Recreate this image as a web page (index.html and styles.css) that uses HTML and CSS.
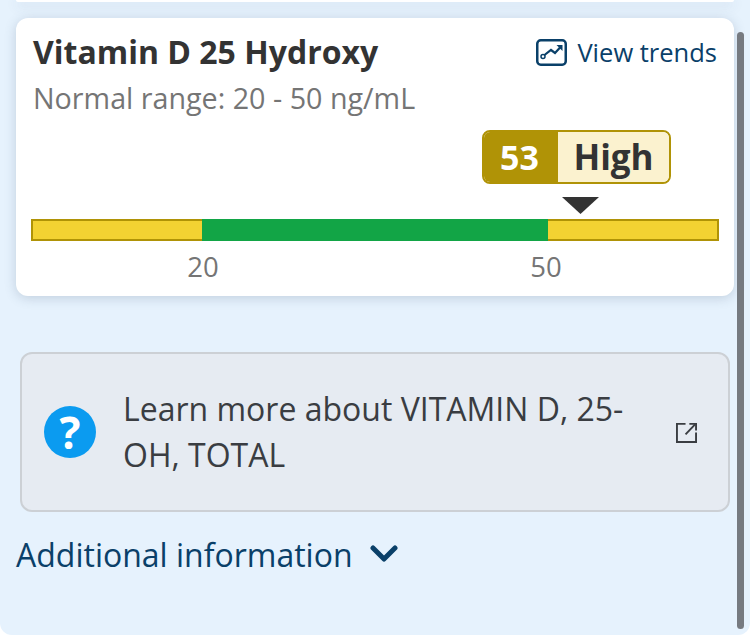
FILE: index.html
```html
<!DOCTYPE html>
<html lang="en">
<head>
<meta charset="utf-8">
<title>Vitamin D 25 Hydroxy</title>
<link rel="stylesheet" href="styles.css">
</head>
<body>
<main class="panel">
  <div class="prev-card"></div>
  <section class="card">
    <header class="card-head">
      <h2 class="title">Vitamin D 25 Hydroxy</h2>
      <a class="trends">
        <svg class="trends-icon" viewBox="0 0 31 27" aria-hidden="true">
          <rect x="1.25" y="1.25" width="28.5" height="24.5" rx="3.5" fill="none" stroke="currentColor" stroke-width="2.5"/>
          <path d="M8.5 16 L15 11 L19 14 L25 7.5" fill="none" stroke="currentColor" stroke-width="2.2"/>
          <path d="M20.5 6 H26.5 V12 Z" fill="currentColor"/>
          <circle cx="7" cy="17.5" r="2" fill="none" stroke="currentColor" stroke-width="1.5"/>
        </svg>
        <span>View trends</span>
      </a>
    </header>
    <p class="range">Normal range: 20 - 50 ng/mL</p>
    <div class="badge-row">
      <div class="badge"><span class="badge-value">53</span><span class="badge-label">High</span></div>
    </div>
    <div class="pointer-row"><div class="pointer"></div></div>
    <div class="bar">
      <div class="seg seg-low"></div>
      <div class="seg seg-normal"></div>
      <div class="seg seg-high"></div>
    </div>
    <div class="scale">
      <span class="tick tick-20">20</span>
      <span class="tick tick-50">50</span>
    </div>
  </section>
  <a class="learn">
    <span class="help-icon" aria-hidden="true">?</span>
    <span class="learn-text">Learn more about VITAMIN D, 25-OH, TOTAL</span>
    <svg class="ext-icon" viewBox="0 0 22 22" aria-hidden="true">
      <path d="M10 2 H1 V21 H21 V11" fill="none" stroke="currentColor" stroke-width="2"/>
      <path d="M10 13 L20 2.5" fill="none" stroke="currentColor" stroke-width="2"/>
      <path d="M14 2 H21 V9" fill="none" stroke="currentColor" stroke-width="2"/>
    </svg>
  </a>
  <a class="additional">
    <span>Additional information</span>
    <svg class="chevron" viewBox="0 0 28 18" aria-hidden="true">
      <path d="M3 3 L14 14 L25 3" fill="none" stroke="currentColor" stroke-width="5" stroke-linecap="round" stroke-linejoin="round"/>
    </svg>
  </a>
  <div class="scrollbar"></div>
</main>
</body>
</html>
```
FILE: styles.css
```css
* { box-sizing: border-box; }
html, body { margin: 0; height: 100%; background: #ffffff; }
body { font-family: "Open Sans", "Noto Sans", sans-serif; overflow: hidden; }
.panel {
  position: relative;
  width: 750px;
  height: 635px;
  background: #e6f2fd;
  border-radius: 0 0 12px 12px;
  overflow: hidden;
}
.prev-card {
  height: 2px;
  margin: 0 16px 16px;
  background: #fff;
  border-radius: 0 0 10px 10px;
  box-shadow: 0 3px 12px rgba(60, 80, 110, .28);
}
.card {
  margin: 0 16px;
  height: 278px;
  background: #fff;
  border-radius: 12px;
  padding: 14px 15px 0 15px;
  box-shadow: 0 2px 12px rgba(60, 80, 110, .22);
}
.card-head { display: flex; justify-content: space-between; align-items: center; height: 40px; padding-left: 2px; }
.title { margin: 0; font-size: 32px; line-height: 40px; font-weight: 700; color: #333; }
.trends { display: flex; align-items: center; gap: 10px; color: #0a4069; font-size: 25.5px; line-height: 40px; margin-right: 2px; }
.trends-icon { width: 31px; height: 27px; }
.range { margin: 8px 0 0; padding-left: 2px; font-size: 28.7px; line-height: 36px; color: #757575; }
.badge-row { display: flex; justify-content: flex-end; margin-top: 14px; padding-right: 48px; }
.badge {
  display: flex;
  width: 189px;
  height: 54px;
  border: 2px solid #b09306;
  border-radius: 8px;
  overflow: hidden;
  font-weight: 700;
  line-height: 50px;
}
.badge-value { width: 74px; padding-right: 3px; background: #b09306; color: #fff; font-size: 34px; text-align: center; }
.badge-label { flex: 1; background: #fbf2cf; color: #333; font-size: 35px; text-align: center; }
.pointer-row { display: flex; justify-content: flex-end; height: 35px; padding: 13px 120px 0 0; }
.pointer { width: 37px; height: 17px; background: #333; clip-path: polygon(0 0, 100% 0, 50% 100%); }
.bar { display: flex; height: 22px; }
.seg { height: 100%; border-top: 2px solid #b09306; border-bottom: 2px solid #b09306; }
.seg-low { width: 171px; background: #f3d232; border-left: 2px solid #b09306; }
.seg-normal { width: 346px; background: #12a546; border-color: #12a546; }
.seg-high { flex: 1; background: #f3d232; border-right: 2px solid #b09306; }
.scale { display: flex; margin-top: 7px; font-size: 27.5px; line-height: 38px; color: #757575; }
.tick { display: block; width: 60px; text-align: center; }
.tick-20 { margin-left: 142px; }
.tick-50 { margin-left: 283px; }
.learn {
  display: flex;
  align-items: center;
  margin: 56px 20px 0;
  height: 160px;
  padding: 0 31px 0 22px;
  background: #e6ebf2;
  border: 2px solid #ccd0d5;
  border-radius: 12px;
  color: #3a3d42;
}
.help-icon {
  display: flex;
  align-items: center;
  justify-content: center;
  flex: none;
  width: 52px;
  height: 52px;
  border-radius: 50%;
  background: #0b9bf0;
  color: #fff;
  font-size: 44px;
  font-weight: 700;
  line-height: 52px;
}
.learn-text { flex: 1; margin: 0 40px 0 27px; font-size: 32px; line-height: 46px; }
.ext-icon { width: 21px; height: 21px; flex: none; }
.additional { display: flex; align-items: center; gap: 17px; margin: 19px 0 0 16px; height: 46px; color: #0a4069; font-size: 32px; }
.chevron { width: 28px; height: 18px; }
.scrollbar {
  position: absolute;
  left: 737px;
  top: 32px;
  width: 7px;
  height: 597px;
  background: #767a80;
  border-radius: 4px;
}
```
